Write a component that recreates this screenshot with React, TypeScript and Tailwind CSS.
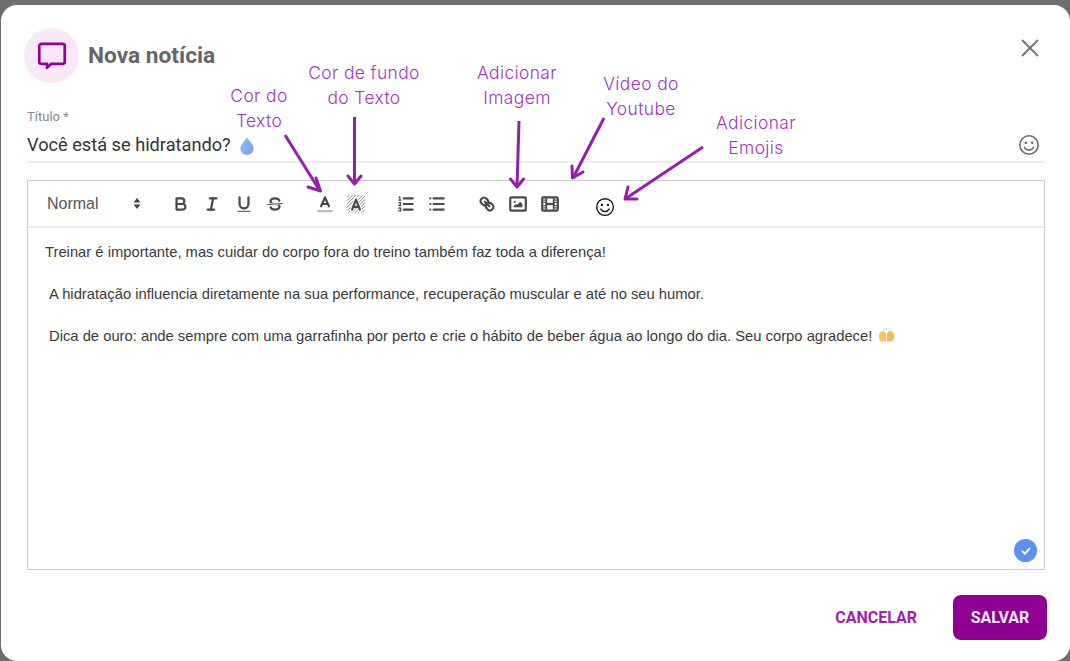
import type { ReactNode } from 'react';

const ink = '#4a4a4a';

// toolbar glyphs, 18x18 grid
function Glyph({ children }: { children: ReactNode }) {
  return (
    <svg viewBox="0 0 18 18" className="h-[20px] w-[20px]" fill="none" stroke={ink} strokeWidth={2} strokeLinecap="round" strokeLinejoin="round">
      {children}
    </svg>
  );
}

const toolGroups: ReactNode[][] = [
  [
    <Glyph key="b">
      <path d="M5,4H9.5A2.5,2.5,0,0,1,12,6.5v0A2.5,2.5,0,0,1,9.5,9H5V4Z" />
      <path d="M5,9h5.5A2.5,2.5,0,0,1,13,11.5v0A2.5,2.5,0,0,1,10.5,14H5V9Z" />
    </Glyph>,
    <Glyph key="i">
      <line x1="7" x2="13" y1="4" y2="4" />
      <line x1="5" x2="11" y1="14" y2="14" />
      <line x1="8" x2="10" y1="14" y2="4" />
    </Glyph>,
    <Glyph key="u">
      <path d="M5,3V9a4,4,0,0,0,4,4H9a4,4,0,0,0,4-4V3" />
      <rect x="3" y="15" width="12" height="1" rx=".5" fill={ink} strokeWidth={0} />
    </Glyph>,
    <Glyph key="s">
      <line x1="15.5" x2="2.5" y1="8.5" y2="9.5" strokeWidth={1} />
      <path stroke="none" fill={ink} d="M9.007,8C6.542,7.791,6,7.519,6,6.5,6,5.792,7.283,5,9,5c1.571,0,2.765.679,2.969,1.309a1,1,0,0,0,1.9-.617C13.356,4.106,11.354,3,9,3,6.2,3,4,4.538,4,6.5a3.2,3.2,0,0,0,.5,1.843Z" />
      <path stroke="none" fill={ink} d="M8.984,10C11.457,10.208,12,10.479,12,11.5c0,.708-1.283,1.5-3,1.5-1.571,0-2.765-.679-2.969-1.308a1,1,0,1,0-1.9.617C4.644,13.894,6.646,15,9,15c2.8,0,5-1.538,5-3.5a3.2,3.2,0,0,0-.5-1.843Z" />
    </Glyph>,
  ],
  [
    <Glyph key="c">
      <line x1="3" x2="15" y1="15.5" y2="15.5" stroke="#bbb" />
      <polyline points="5.500 11 9 3 12.500 11" />
      <line x1="11.630" x2="6.380" y1="9" y2="9" />
    </Glyph>,
    <Glyph key="bg">
      <g stroke="#777" strokeWidth={0.8} strokeLinecap="butt">
        <path d="M1 3L3 1M1 6L6 1M1 9L9 1M1 12L12 1M1 15L15 1M2 17L17 2M5 17L17 5M8 17L17 8M11 17L17 11M14 17L17 14" />
      </g>
      <polyline points="5.500 14 9 5 12.500 14" stroke="#fff" strokeWidth={4} />
      <polyline points="5.500 14 9 5 12.500 14" />
      <line x1="11.630" x2="6.380" y1="11.500" y2="11.500" />
    </Glyph>,
  ],
  [
    <Glyph key="ol">
      <line x1="7" x2="15" y1="4" y2="4" />
      <line x1="7" x2="15" y1="9" y2="9" />
      <line x1="7" x2="15" y1="14" y2="14" />
      <line x1="2.500" x2="4.500" y1="5.500" y2="5.500" strokeWidth={1} />
      <path strokeWidth={1} d="M3.500,5.500V2.500L2.600,3" />
      <path strokeWidth={1} d="M4.500,10.500h-2c0-.234,1.850-1.076,1.850-2.234A0.959,0.959,0,0,0,2.500,8.156" />
      <path strokeWidth={1} d="M2.500,14.846a0.959,0.959,0,0,0,1.850-.109A0.700,0.700,0,0,0,3.750,14a0.688,0.688,0,0,0,.600-0.736,0.959,0.959,0,0,0-1.850-.109" />
    </Glyph>,
    <Glyph key="ul">
      <line x1="6" x2="15" y1="4" y2="4" />
      <line x1="6" x2="15" y1="9" y2="9" />
      <line x1="6" x2="15" y1="14" y2="14" />
      <line x1="3" x2="3" y1="4" y2="4" />
      <line x1="3" x2="3" y1="9" y2="9" />
      <line x1="3" x2="3" y1="14" y2="14" />
    </Glyph>,
  ],
  [
    <Glyph key="link">
      <line x1="7" x2="11" y1="7" y2="11" />
      <path d="M8.900,4.577a3.476,3.476,0,0,1,.360,4.679A3.476,3.476,0,0,1,4.577,8.900C3.185,7.500,2.035,6.400,4.217,4.217S7.500,3.185,8.900,4.577Z" />
      <path d="M13.423,9.100a3.476,3.476,0,0,0-4.679-.360,3.476,3.476,0,0,0,.360,4.679c1.392,1.392,2.500,2.542,4.679.360S14.815,10.500,13.423,9.100Z" />
    </Glyph>,
    <Glyph key="img">
      <rect x="2" y="3" width="14" height="12" rx="1" />
      <circle cx="6" cy="7" r="1" fill={ink} stroke="none" />
      <polyline fill={ink} stroke="none" points="5 12 5 11 7 9 8 10 11 7 13 9 13 12 5 12" />
    </Glyph>,
    <Glyph key="vid">
      <rect x="2" y="3" width="14" height="12" rx="1" />
      <g stroke="none" fill={ink}>
        <rect height="12" width="1.500" x="5" y="3" />
        <rect height="12" width="1.500" x="11.500" y="3" />
        <rect height="2" width="8" x="5" y="8" />
        <rect height="1" width="3" x="3" y="5" />
        <rect height="1" width="3" x="3" y="7" />
        <rect height="1" width="3" x="3" y="10" />
        <rect height="1" width="3" x="3" y="12" />
        <rect height="1" width="3" x="12" y="5" />
        <rect height="1" width="3" x="12" y="7" />
        <rect height="1" width="3" x="12" y="10" />
        <rect height="1" width="3" x="12" y="12" />
      </g>
    </Glyph>,
  ],
];

function Smiley({ className, color }: { className: string; color: string }) {
  return (
    <svg viewBox="0 0 24 24" className={className} fill="none" stroke={color} strokeWidth={1.7} strokeLinecap="round">
      <circle cx="12" cy="12" r="10" />
      <circle cx="8.500" cy="9.500" r="1.400" fill={color} stroke="none" />
      <circle cx="15.500" cy="9.500" r="1.400" fill={color} stroke="none" />
      <path d="M7 14.500c1.200 2 3 3 5 3s3.800-1 5-3" />
    </svg>
  );
}

function Droplet() {
  return (
    <svg viewBox="0 0 16 20" className="ml-[8px] h-[19px] w-[16px]">
      <defs>
        <linearGradient id="drop" x1="0" y1="0" x2="1" y2="1">
          <stop offset="0" stopColor="#6fd0ea" />
          <stop offset="1" stopColor="#9a8cf5" />
        </linearGradient>
      </defs>
      <path d="M8 1C6 5 1 9 1 13.500a7 6.500 0 0 0 14 0C15 9 10 5 8 1Z" fill="url(#drop)" />
    </svg>
  );
}

function RaisedHands() {
  return (
    <svg viewBox="0 0 18 16" className="ml-[6px] inline-block h-[16px] w-[17px] align-[-2px]">
      <path d="M1 9c0-2 1-4 3-5 1-.5 2 0 3 .5.8.7 1.500 2 1.500 3.500V15H4C2 15 1 12 1 9Z" fill="#f6c46f" />
      <path d="M17 9c0-2-1-4-3-5-1-.5-2 0-3 .5-.8.7-1.500 2-1.500 3.500V15h4c2 0 3.500-3 3.500-6Z" fill="#f3b95c" />
      <path d="M6 1l.4 1.500M9 .5v2M12 1l-.4 1.500" stroke="#9db5ea" strokeWidth=".8" />
    </svg>
  );
}

type Note = { lines: [string, string]; box: string };

const notes: Note[] = [
  { lines: ['Cor do', 'Texto'], box: 'left-[199px] top-[84px]' },
  { lines: ['Cor de fundo', 'do Texto'], box: 'left-[304px] top-[61px]' },
  { lines: ['Adicionar', 'Imagem'], box: 'left-[457px] top-[61px]' },
  { lines: ['Vídeo do', 'Youtube'], box: 'left-[581px] top-[72px]' },
  { lines: ['Adicionar', 'Emojis'], box: 'left-[696px] top-[111px]' },
];

const arrows = [
  { d: 'M285 135 L320 191', head: 'M316 178 L320.500 191 L308 187' },
  { d: 'M354.500 117 L354.500 184', head: 'M348 176 L354.500 184 L361 176' },
  { d: 'M519 121 L517 187', head: 'M510.500 179 L517 187 L523.500 179' },
  { d: 'M604 118 L573 178', head: 'M572 166 L572.500 178 L583 172' },
  { d: 'M703 147 L625 199', head: 'M628 187 L625 199 L637 199' },
];

export default function App() {
  return (
    <div className="relative h-[661px] w-[1070px] overflow-hidden bg-[#6e6e6e] pt-[5px] pl-[1px] font-['Roboto',sans-serif]">
      <div className="flex h-[656px] w-[1069px] flex-col rounded-[16px] bg-white">
        <div className="flex items-center pl-[23px] pr-[28px] pt-[23px]">
          <div className="flex h-[55px] w-[55px] items-center justify-center rounded-full bg-[#f8e8f8]">
            <svg viewBox="0 0 24 24" className="h-[34px] w-[34px]" fill="none" stroke="#930099" strokeWidth={1.9} strokeLinejoin="round">
              <path d="M4.500 3.500h15a1.500 1.500 0 0 1 1.500 1.500v11a1.500 1.500 0 0 1-1.500 1.500h-8l-3 2.800v-2.800h-4A1.500 1.500 0 0 1 3 16V5a1.500 1.500 0 0 1 1.500-1.500Z" />
            </svg>
          </div>
          <h1 className="mt-[2px] ml-[9px] text-[22.700px] font-bold text-[#666]">Nova notícia</h1>
          <svg viewBox="0 0 24 24" className="mb-[15px] ml-auto h-[24px] w-[24px]" fill="none" stroke="#757575" strokeWidth={2}>
            <path d="M4 4l16 16M20 4L4 20" />
          </svg>
        </div>

        <div className="mr-[25px] ml-[26px] mt-[26px] border-b-2 border-[#eeeeee] pb-[2px]">
          <div className="text-[13px] leading-[16px] text-[#8a8a8a]">Título *</div>
          <div className="mt-[6px] flex h-[28px] items-center text-[18.200px] text-[#333]">
            Você está se hidratando?
            <Droplet />
            <Smiley className="ml-auto mr-[5px] h-[22px] w-[22px]" color="#666" />
          </div>
        </div>

        <div className="mr-[25px] ml-[26px] mt-[17px] flex h-[390px] flex-col border border-[#ccc]">
          <div className="flex h-[47px] items-center border-b-2 border-[#eaeaea] pl-[19px]">
            <div className="flex w-[94px] items-center justify-between font-['Liberation_Sans',sans-serif] text-[16px] text-[#555]">
              Normal
              <svg viewBox="0 0 8 12" className="h-[13px] w-[8px]" fill="#444">
                <path d="M4 0.500L7.500 5h-7ZM4 11.500L.5 7h7Z" />
              </svg>
            </div>
            <div className="ml-[24px] flex items-center">
              {toolGroups.map((group, i) => (
                <div key={i} className="mr-[18px] flex">
                  {group.map((icon, j) => (
                    <div key={j} className="flex w-[31.500px] justify-center">{icon}</div>
                  ))}
                </div>
              ))}
              <Smiley className="mt-[7px] ml-[11px] h-[20px] w-[20px]" color="#1a1a1a" />
            </div>
          </div>

          <div className="relative flex-1 pt-[14px] pl-[17px] font-['Liberation_Sans',sans-serif] text-[14.770px] leading-[21px] text-[#3a3a3a]">
            <p>Treinar é importante, mas cuidar do corpo fora do treino também faz toda a diferença!</p>
            <p className="mt-[21px] pl-[4px]">A hidratação influencia diretamente na sua performance, recuperação muscular e até no seu humor.</p>
            <p className="mt-[21px] pl-[4px]">
              Dica de ouro: ande sempre com uma garrafinha por perto e crie o hábito de beber água ao longo do dia. Seu corpo agradece!
              <RaisedHands />
            </p>
            <div className="absolute right-[7px] bottom-[7px] flex h-[23px] w-[23px] items-center justify-center rounded-full bg-[#5b8ff0]">
              <svg viewBox="0 0 12 12" className="h-[12px] w-[12px]" fill="none" stroke="#fff" strokeWidth={2} strokeLinecap="round" strokeLinejoin="round">
                <path d="M2.500 6.500l2.500 2.200 4.500-5" />
              </svg>
            </div>
          </div>
        </div>

        <div className="mt-[25px] flex items-center justify-end pr-[23px]">
          <button className="mr-[36px] text-[16px] font-bold text-[#a01fa8]">CANCELAR</button>
          <button className="h-[45px] w-[94px] rounded-[8px] bg-[#8e0090] text-[16px] font-bold text-[#f8eaf8]">SALVAR</button>
        </div>
      </div>

      {notes.map((note) => (
        <div key={note.lines[0] + note.lines[1]} className={`absolute w-[120px] text-center font-['Inter',sans-serif] text-[17.400px] leading-[24.500px] font-light tracking-[0.4px] text-[#a235b8] ${note.box}`}>
          <div>{note.lines[0]}</div>
          <div>{note.lines[1]}</div>
        </div>
      ))}

      {/* annotation arrows */}
      <svg className="absolute top-0 left-0 h-[661px] w-[1070px]" viewBox="0 0 1070 661" fill="none" stroke="#9420a8" strokeWidth={3}>
        {arrows.map((a) => (
          <g key={a.d}>
            <path d={a.d} />
            <path d={a.head} strokeLinecap="round" strokeLinejoin="round" />
          </g>
        ))}
      </svg>
    </div>
  );
}
